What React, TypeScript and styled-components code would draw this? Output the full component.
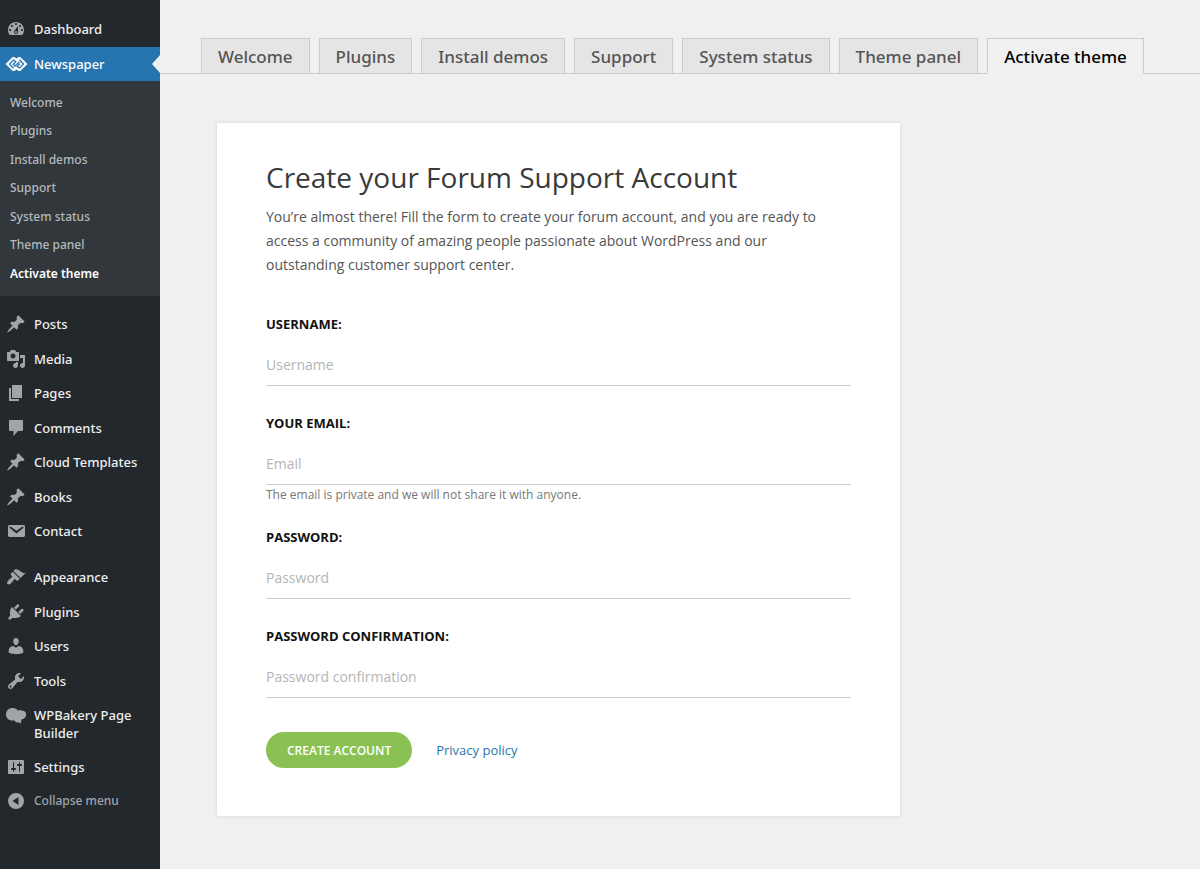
import React from "react";
import styled, { createGlobalStyle, css } from "styled-components";

const GlobalStyle = createGlobalStyle`
  *, *::before, *::after { box-sizing: border-box; }
  body {
    margin: 0;
    background: #f0f0f0;
    font-family: "Open Sans", "Noto Sans", sans-serif;
    font-size: 14px;
    color: #444;
  }
`;

const Layout = styled.div`
  display: flex;
  min-height: 100vh;
`;

const Sidebar = styled.nav`
  flex: 0 0 160px;
  padding-top: 12px;
  background: #23282d;
`;

const MenuList = styled.ul`
  list-style: none;
  margin: 0 0 11px;
  padding: 0;
`;

const MenuItem = styled.li`
  &:nth-child(odd) > * { min-height: 35px; }
`;

const rowStyles = css`
  display: flex;
  align-items: flex-start;
  gap: 8px;
  width: 100%;
  min-height: 34px;
  padding: 8px 12px 8px 6px;
  border: 0;
  font-family: "Noto Sans", "Open Sans", sans-serif;
  font-size: 13px;
  font-weight: 500;
  line-height: 18px;
  text-align: left;
  text-decoration: none;
`;

const MenuLink = styled.a<{ $current?: boolean }>`
  ${rowStyles}
  position: relative;
  background: ${(p) => (p.$current ? "#2775b0" : "transparent")};
  color: ${(p) => (p.$current ? "#fff" : "#eee")};
  ${(p) =>
    p.$current &&
    css`
      &::after {
        content: "";
        position: absolute;
        top: 8px;
        right: 0;
        border: solid transparent;
        border-width: 9px 8px 9px 0;
        border-right-color: #f0f0f0;
      }
    `}
`;

const CollapseButton = styled.button`
  ${rowStyles}
  background: none;
  color: #a0a5aa;
  font-size: 12px;
  cursor: pointer;
`;

const IconBox = styled.svg<{ $bright?: boolean }>`
  flex: none;
  width: 20px;
  height: 20px;
  margin: -1px 0;
  overflow: visible;
  fill: ${(p) => (p.$bright ? "#fff" : "#a0a5aa")};
`;

const SubMenu = styled.ul`
  list-style: none;
  margin: 0;
  padding: 8px 0;
  background: #32373c;
`;

const SubItem = styled.li`
  display: flex;
  min-height: 28px;
  &:nth-child(even) { min-height: 29px; }
`;

const SubLink = styled.a<{ $current?: boolean }>`
  flex: 1;
  padding: 5px 10px;
  font-family: "Noto Sans", "Open Sans", sans-serif;
  font-size: 12px;
  font-weight: ${(p) => (p.$current ? 600 : 500)};
  line-height: 18px;
  color: ${(p) => (p.$current ? "#fff" : "#b4b9be")};
  text-decoration: none;
`;

const Main = styled.main`
  flex: 1;
  min-width: 0;
  padding-top: 38px;
`;

const TabBar = styled.nav`
  display: flex;
  gap: 9px;
  padding-left: 41px;
  border-bottom: 1px solid #ccc;
`;

const Tab = styled.a<{ $current?: boolean }>`
  margin-bottom: -1px;
  padding: 6px 16px 5px;
  border: 1px solid #ccc;
  border-bottom-color: ${(p) => (p.$current ? "#f0f0f0" : "#ccc")};
  background: ${(p) => (p.$current ? "#f0f0f0" : "#e5e5e5")};
  color: ${(p) => (p.$current ? "#000" : "#555")};
  font-family: "Noto Sans", "Open Sans", sans-serif;
  font-size: 17px;
  font-weight: 500;
  line-height: 23px;
  white-space: nowrap;
  text-decoration: none;
`;

const Card = styled.section`
  max-width: 683px;
  margin: 49px 57px 53px;
  padding: 34px 49px 48px;
  background: #fff;
  box-shadow: 0 0 4px rgba(0, 0, 0, 0.12);
`;

const Title = styled.h1`
  margin: 0 0 8px;
  font-size: 28px;
  font-weight: 400;
  line-height: 40px;
  color: #3a3a3a;
`;

const Intro = styled.p`
  max-width: 570px;
  margin: 0 0 37px;
  line-height: 24px;
  color: #555;
`;

const Field = styled.div<{ $withHint?: boolean }>`
  display: flex;
  flex-direction: column;
  margin-bottom: ${(p) => (p.$withHint ? 22 : 27)}px;
`;

const Label = styled.label`
  margin-bottom: 11px;
  font-size: 13px;
  font-weight: 700;
  line-height: 20px;
  color: #111;
`;

const TextInput = styled.input`
  height: 41px;
  padding: 0 0 2px;
  border: 0;
  border-bottom: 1px solid #ccc;
  background: none;
  font: inherit;
  color: #333;
  outline: none;
  &::placeholder { color: #b5b5b5; opacity: 1; }
`;

const Hint = styled.span`
  font-size: 12px;
  line-height: 20px;
  color: #777;
`;

const Actions = styled.div`
  display: flex;
  align-items: center;
  gap: 24px;
  margin-top: 34px;
`;

const SubmitButton = styled.button`
  height: 36px;
  padding: 0 21px;
  border: 0;
  border-radius: 18px;
  background: #89c153;
  color: #fff;
  font-family: inherit;
  font-size: 12px;
  font-weight: 600;
  cursor: pointer;
`;

const PolicyLink = styled.a`
  font-size: 13px;
  color: #2a76ae;
  text-decoration: none;
`;

const icons = {
  dashboard:
    "M3.76 16h12.48c1.1-1.37 1.76-3.11 1.76-5 0-4.42-3.58-8-8-8s-8 3.58-8 8c0 1.89.66 3.63 1.76 5zM10 4c.55 0 1 .45 1 1s-.45 1-1 1-1-.45-1-1 .45-1 1-1zM6 6c.55 0 1 .45 1 1s-.45 1-1 1-1-.45-1-1 .45-1 1-1zm8 0c.55 0 1 .45 1 1s-.45 1-1 1-1-.45-1-1 .45-1 1-1zm-5.37 5.55L12 7v6c0 1.1-.9 2-2 2s-2-.9-2-2c0-.57.24-1.08.63-1.45zM4 10c.55 0 1 .45 1 1s-.45 1-1 1-1-.45-1-1 .45-1 1-1zm12 0c.55 0 1 .45 1 1s-.45 1-1 1-1-.45-1-1 .45-1 1-1zm-5 3c0-.55-.45-1-1-1s-1 .45-1 1 .45 1 1 1 1-.45 1-1z",
  pin: "M10.44 3.02l1.82-1.82 6.36 6.35-1.83 1.82c-1.05-.68-2.48-.57-3.41.36l-.75.75c-.92.93-1.04 2.35-.35 3.41l-1.83 1.82-2.41-2.41-2.8 2.79c-.42.42-3.38 2.71-3.8 2.29s1.86-3.39 2.28-3.81l2.79-2.79L4.1 9.36l1.83-1.82c1.05.69 2.48.57 3.4-.36l.75-.75c.93-.92 1.05-2.35.36-3.41z",
  media:
    "M13 11V4c0-.55-.45-1-1-1h-1.67L9 1H5L3.67 3H2c-.55 0-1 .45-1 1v7c0 .55.45 1 1 1h10c.55 0 1-.45 1-1zM7 4.5c1.38 0 2.5 1.12 2.5 2.5S8.38 9.5 7 9.5 4.5 8.38 4.5 7 5.62 4.5 7 4.5zM14 6h5v10.5c0 1.38-1.12 2.5-2.5 2.5S14 17.88 14 16.5s1.12-2.5 2.5-2.5c.17 0 .34.02.5.05V9h-3V6zm-4 8.05V13h2v3.5c0 1.38-1.12 2.5-2.5 2.5S7 17.88 7 16.5 8.12 14 9.5 14c.17 0 .34.02.5.05z",
  page: "M6 15V2h10v13H6zm-1 1h8v2H3V5h2v11z",
  comment: "M4 2h12q1 0 1 1v9q0 1-1 1h-4l-4.500 5v-5H4q-1 0-1-1V3q0-1 1-1z",
  mail: "M3.870 4h13.250C18.370 4 19 4.590 19 5.790v8.420c0 1.190-.63 1.790-1.880 1.790H3.870c-1.250 0-1.880-.6-1.880-1.790V5.790c0-1.200.63-1.790 1.880-1.790zm6.620 8.600l6.740-5.530c.24-.2.43-.66.13-1.070-.29-.41-.82-.42-1.170-.17l-5.700 3.860L4.800 5.830c-.35-.25-.88-.24-1.170.17-.3.41-.11.87.13 1.070z",
  brush:
    "M14.48 11.06L7.41 3.99l1.5-1.5c.5-.56 2.3-.47 3.51.32 1.21.8 1.43 1.28 2.91 2.1 1.18.64 2.45 1.26 4.45.85zm-.71.71L6.7 4.7 4.93 6.47c-.39.39-.39 1.02 0 1.41l1.06 1.06c.39.39.39 1.03 0 1.42-.6.6-1.43 1.11-2.21 1.69-.35.26-.7.53-1.01.84C1.43 14.23.4 16.08 1.4 17.07c.99 1 2.84-.03 4.18-1.36.31-.31.58-.66.85-1.02.57-.78 1.08-1.61 1.69-2.21.39-.39 1.02-.39 1.41 0l1.06 1.06c.39.39 1.02.39 1.41 0z",
  plug: "M13.11 4.36L9.87 7.6 8 5.73l3.24-3.24c.35-.34 1.05-.2 1.56.32.52.51.66 1.21.31 1.55zm-8 1.77l.91-1.12 9.01 9.01-1.19.84c-.71.71-2.63 1.16-3.82 1.16H6.14L4.9 17.26c-.59.59-1.54.59-2.12 0-.59-.58-.59-1.53 0-2.12l1.24-1.24v-3.88c0-1.13.4-3.19 1.09-3.89zm7.26 3.97l3.24-3.24c.34-.35 1.04-.21 1.55.31.52.51.66 1.21.31 1.55l-3.24 3.25z",
  user: "M10 9.25c-2.27 0-2.73-3.44-2.73-3.44C7 4.02 7.82 2 9.97 2c2.16 0 2.98 2.02 2.71 3.81 0 0-.41 3.44-2.68 3.44zm0 2.57L12.72 10c2.39 0 4.52 2.33 4.52 4.53v2.49s-3.65 1.13-7.24 1.13c-3.65 0-7.24-1.13-7.24-1.13v-2.49c0-2.25 1.94-4.48 4.47-4.48z",
  wrench:
    "M16.68 9.77c-1.34 1.34-3.3 1.67-4.95.99l-5.41 6.52c-.99.99-2.59.99-3.58 0s-.99-2.59 0-3.57l6.52-5.42c-.68-1.65-.35-3.61.99-4.95 1.28-1.28 3.12-1.62 4.72-1.06l-2.89 2.89 2.82 2.82 2.86-2.87c.53 1.58.18 3.39-1.08 4.65zM3.81 16.21c.4.39 1.04.39 1.43 0 .4-.4.4-1.04 0-1.43-.39-.4-1.03-.4-1.43 0-.39.39-.39 1.03 0 1.43z",
  bakery:
    "M6.500 3C9 3 10.900 4 11.900 5.800c1.200-1.100 3.200-1 4.100 0 2.700-.2 4.400 1.700 4.100 4.200-.3 2.800-2.200 4.300-4.600 4.200l-.7 4.200c-1.600-1.200-2.300-.9-3.700-1-1.300-.1-2.200-.9-2.900-2.100C3.800 16.600 0 13.600 0 9.300 0 5.700 2.800 3 6.500 3z",
  sliders:
    "M18 16V4c0-.55-.45-1-1-1H3c-.55 0-1 .45-1 1v12c0 .55.45 1 1 1h14c.55 0 1-.45 1-1zM8 11h1c.55 0 1 .45 1 1s-.45 1-1 1H8v1.500c0 .28-.22.5-.5.5s-.5-.22-.5-.5V13H6c-.55 0-1-.45-1-1s.45-1 1-1h1V5.500c0-.28.22-.5.5-.5s.5.22.5.5V11zm5-2h-1c-.55 0-1-.45-1-1s.45-1 1-1h1V5.500c0-.28.22-.5.5-.5s.5.22.5.5V7h1c.55 0 1 .45 1 1s-.45 1-1 1h-1v5.500c0 .28-.22.5-.5.5s-.5-.22-.5-.5V9z",
  collapse: "M10 2a8 8 0 1 1 0 16 8 8 0 0 1 0-16zM12.500 6L6.500 10l6 4z",
};

type IconName = keyof typeof icons;

const Icon = ({ name }: { name: IconName }) => (
  <IconBox viewBox="0 0 20 20" aria-hidden="true">
    <path fillRule="evenodd" d={icons[name]} />
  </IconBox>
);

const NewspaperLogo = () => (
  <IconBox $bright viewBox="0 0 20 20" aria-hidden="true">
    <path d="M6.700 3h1.600l2.200 1.600L12.700 3h1.600l7.200 7-7.200 7h-1.600l-2.200-1.600L8.300 17H6.700L-.5 10z" />
    <g fill="none" stroke="#2775b0" strokeWidth="1.3">
      <path d="M7.500 14.200L3.500 10 7.500 6 9.800 7.600 7.200 10.200 9 12l4.500-4.300" />
      <path d="M13.500 5.800L17.500 10l-4 4-2.300-1.600 2.600-2.600" />
    </g>
  </IconBox>
);

const contentMenu: [IconName, string][] = [
  ["pin", "Posts"],
  ["media", "Media"],
  ["page", "Pages"],
  ["comment", "Comments"],
  ["pin", "Cloud Templates"],
  ["pin", "Books"],
  ["mail", "Contact"],
];

const adminMenu: [IconName, string][] = [
  ["brush", "Appearance"],
  ["plug", "Plugins"],
  ["user", "Users"],
  ["wrench", "Tools"],
  ["bakery", "WPBakery Page Builder"],
  ["sliders", "Settings"],
];

const sections = [
  "Welcome",
  "Plugins",
  "Install demos",
  "Support",
  "System status",
  "Theme panel",
  "Activate theme",
];
const currentSection = "Activate theme";

const fields = [
  { id: "username", label: "USERNAME:", placeholder: "Username", type: "text" },
  {
    id: "email",
    label: "YOUR EMAIL:",
    placeholder: "Email",
    type: "email",
    hint: "The email is private and we will not share it with anyone.",
  },
  { id: "password", label: "PASSWORD:", placeholder: "Password", type: "password" },
  {
    id: "password-confirmation",
    label: "PASSWORD CONFIRMATION:",
    placeholder: "Password confirmation",
    type: "password",
  },
];

const MenuGroup = ({
  items,
  children,
}: {
  items: [IconName, string][];
  children?: React.ReactNode;
}) => (
  <MenuList>
    {items.map(([icon, text]) => (
      <MenuItem key={text}>
        <MenuLink href="#">
          <Icon name={icon} />
          <span>{text}</span>
        </MenuLink>
      </MenuItem>
    ))}
    {children}
  </MenuList>
);

export default function App() {
  return (
    <>
      <GlobalStyle />
      <Layout>
        <Sidebar aria-label="Admin menu">
          <MenuList>
            <MenuItem>
              <MenuLink href="#">
                <Icon name="dashboard" />
                <span>Dashboard</span>
              </MenuLink>
            </MenuItem>
            <MenuItem>
              <MenuLink href="#" $current>
                <NewspaperLogo />
                <span>Newspaper</span>
              </MenuLink>
              <SubMenu>
                {sections.map((s) => (
                  <SubItem key={s}>
                    <SubLink href="#" $current={s === currentSection}>
                      {s}
                    </SubLink>
                  </SubItem>
                ))}
              </SubMenu>
            </MenuItem>
          </MenuList>
          <MenuGroup items={contentMenu} />
          <MenuGroup items={adminMenu}>
            <MenuItem>
              <CollapseButton type="button">
                <Icon name="collapse" />
                <span>Collapse menu</span>
              </CollapseButton>
            </MenuItem>
          </MenuGroup>
        </Sidebar>
        <Main>
          <TabBar aria-label="Theme sections">
            {sections.map((s) => (
              <Tab key={s} href="#" $current={s === currentSection}>
                {s}
              </Tab>
            ))}
          </TabBar>
          <Card>
            <Title>Create your Forum Support Account</Title>
            <Intro>
              You’re almost there! Fill the form to create your forum account, and you are ready to
              access a community of amazing people passionate about WordPress and our outstanding
              customer support center.
            </Intro>
            <form onSubmit={(e) => e.preventDefault()}>
              {fields.map((f) => (
                <Field key={f.id} $withHint={!!f.hint}>
                  <Label htmlFor={f.id}>{f.label}</Label>
                  <TextInput id={f.id} type={f.type} placeholder={f.placeholder} />
                  {f.hint && <Hint>{f.hint}</Hint>}
                </Field>
              ))}
              <Actions>
                <SubmitButton type="submit">CREATE ACCOUNT</SubmitButton>
                <PolicyLink href="#">Privacy policy</PolicyLink>
              </Actions>
            </form>
          </Card>
        </Main>
      </Layout>
    </>
  );
}
